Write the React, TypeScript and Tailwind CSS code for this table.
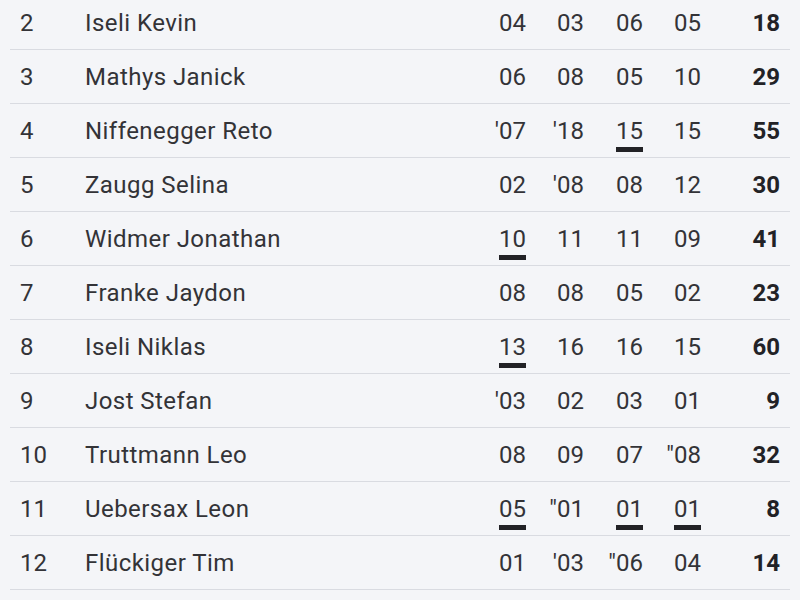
type Score = { v: string; mark?: boolean };

interface Row {
  rank: number;
  name: string;
  scores: Score[];
  total: number;
}

const s = (v: string, mark = false): Score => ({ v, mark });

const rows: Row[] = [
  { rank: 2, name: "Iseli Kevin", scores: [s("04"), s("03"), s("06"), s("05")], total: 18 },
  { rank: 3, name: "Mathys Janick", scores: [s("06"), s("08"), s("05"), s("10")], total: 29 },
  { rank: 4, name: "Niffenegger Reto", scores: [s("'07"), s("'18"), s("15", true), s("15")], total: 55 },
  { rank: 5, name: "Zaugg Selina", scores: [s("02"), s("'08"), s("08"), s("12")], total: 30 },
  { rank: 6, name: "Widmer Jonathan", scores: [s("10", true), s("11"), s("11"), s("09")], total: 41 },
  { rank: 7, name: "Franke Jaydon", scores: [s("08"), s("08"), s("05"), s("02")], total: 23 },
  { rank: 8, name: "Iseli Niklas", scores: [s("13", true), s("16"), s("16"), s("15")], total: 60 },
  { rank: 9, name: "Jost Stefan", scores: [s("'03"), s("02"), s("03"), s("01")], total: 9 },
  { rank: 10, name: "Truttmann Leo", scores: [s("08"), s("09"), s("07"), s("\"08")], total: 32 },
  { rank: 11, name: "Uebersax Leon", scores: [s("05", true), s("\"01"), s("01", true), s("01", true)], total: 8 },
  { rank: 12, name: "Flückiger Tim", scores: [s("01"), s("'03"), s("\"06"), s("04")], total: 14 },
];

function ScoreCell({ score }: { score: Score }) {
  return (
    <div className="text-right">
      <span className="relative inline-block">
        {score.v}
        {score.mark && <span className="absolute left-0 right-0 top-[30px] h-[5px] bg-[#222226]" />}
      </span>
    </div>
  );
}

export default function App() {
  return (
    <div className="min-h-[600px] w-[800px] overflow-hidden bg-[#f4f5f8] px-[10px] text-[24px] leading-[28px] text-[#333337] [font-family:Roboto,'Noto_Sans',sans-serif]">
      <div className="-mt-[4px]">
        {rows.map((r) => (
          <div
            key={r.rank}
            className="grid h-[54px] grid-cols-[65px_1fr_58px_58px_59px_58px_79px] items-center border-b border-[#d9dbe1] pl-[10px] pr-[10px]"
          >
            <div>{r.rank}</div>
            <div className="tracking-[0.45px]">{r.name}</div>
            {r.scores.map((sc, i) => (
              <ScoreCell key={i} score={sc} />
            ))}
            <div className="text-right font-bold text-[#222226]">{r.total}</div>
          </div>
        ))}
      </div>
    </div>
  );
}
